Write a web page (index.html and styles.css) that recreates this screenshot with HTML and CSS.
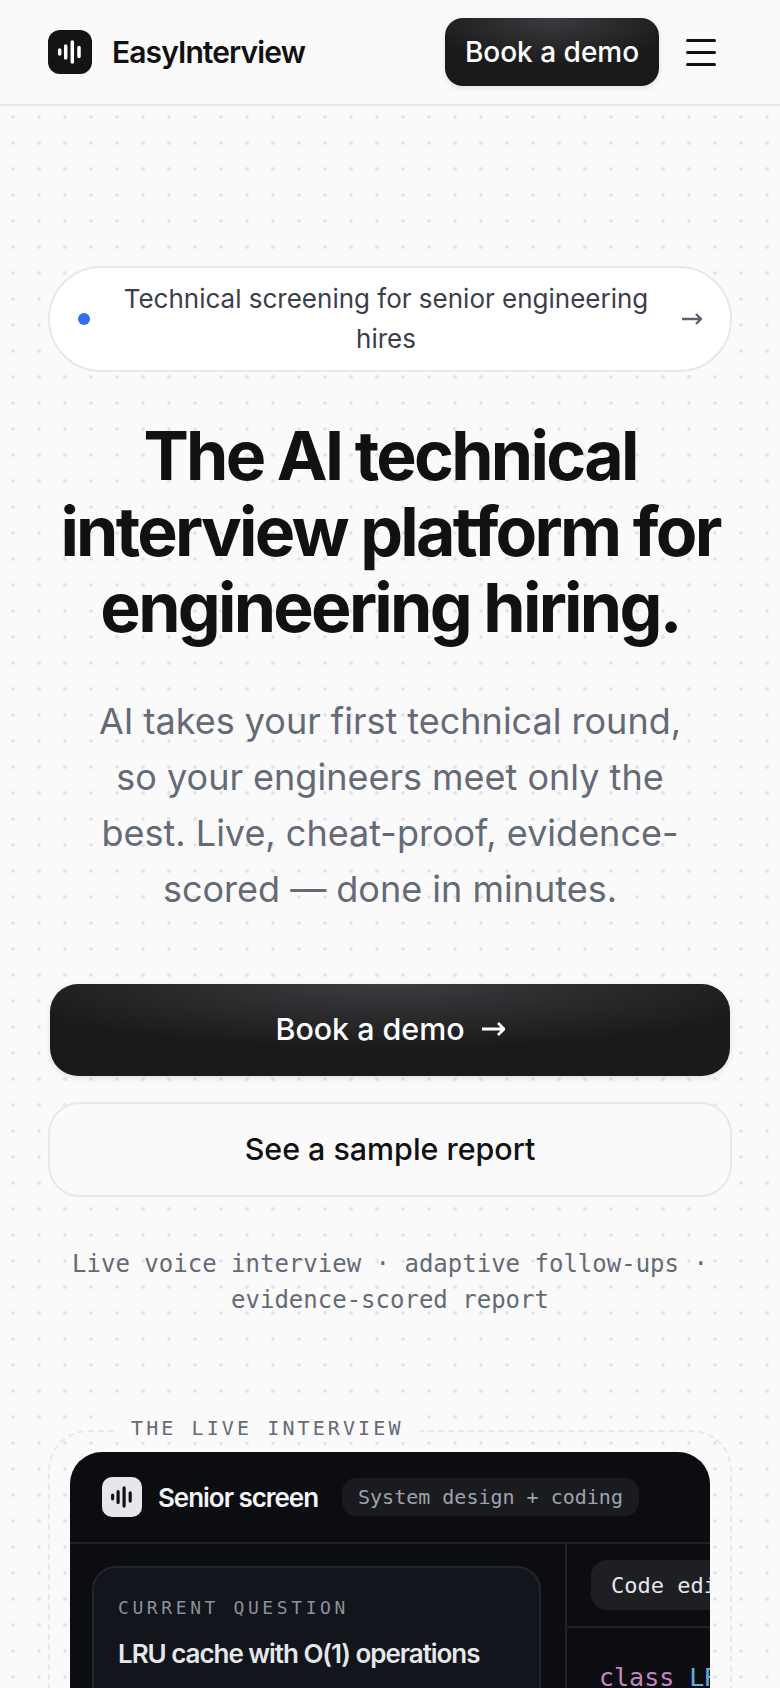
FILE: index.html
```html
<!DOCTYPE html>
<html lang="en">
<head>
<meta charset="utf-8">
<title>EasyInterview</title>
<link rel="stylesheet" href="styles.css">
</head>
<body>
<header class="nav">
  <a class="brand">
    <span class="logo">
      <svg viewBox="0 0 44 44" width="44" height="44"><path class="bars" d="M11.700 20v4M17.700 16v12M24.300 12v20M31 17.500v9"/></svg>
    </span>
    <span class="brand-name">EasyInterview</span>
  </a>
  <div class="nav-actions">
    <a class="btn-dark nav-cta">Book a demo</a>
    <span class="burger"><i></i><i></i><i></i></span>
  </div>
</header>
<main class="hero">
  <div class="badge">
    <span class="badge-dot"></span>
    <span class="badge-text">Technical screening for senior engineering hires</span>
    <svg class="badge-arrow" viewBox="0 0 20 12" width="20" height="12"><path d="M0 6h19M14 1l5 5-5 5"/></svg>
  </div>
  <h1>The AI technical interview platform for engineering hiring.</h1>
  <p class="sub">AI takes your first technical round, so your engineers meet only the best. Live, cheat-proof, evidence-scored — done in minutes.</p>
  <a class="btn-dark btn-main"><span>Book a demo</span><svg class="btn-arrow" viewBox="0 0 23 14" width="23" height="14"><path d="M0 7h22M16 1l6 6-6 6"/></svg></a>
  <a class="btn-ghost">See a sample report</a>
  <p class="note">Live voice interview · adaptive follow-ups · evidence-scored report</p>
  <section class="frame">
    <div class="frame-label">THE LIVE INTERVIEW</div>
    <div class="panel">
      <div class="panel-head">
        <span class="panel-logo">
          <svg viewBox="0 0 44 44" width="40" height="40"><path class="bars" d="M11.700 20v4M17.700 16v12M24.300 12v20M31 17.500v9"/></svg>
        </span>
        <span class="panel-title">Senior screen</span>
        <span class="chip">System design + coding</span>
      </div>
      <div class="panel-body">
        <div class="col-left">
          <div class="qcard">
            <div class="qlabel">CURRENT QUESTION</div>
            <div class="qtitle">LRU cache with O(1) operations</div>
          </div>
        </div>
        <div class="col-right">
          <div class="tabs"><span class="tab">Code editor</span></div>
          <div class="code"><span class="kw">class</span> <span class="cls">LRUCache</span></div>
        </div>
      </div>
    </div>
  </section>
</main>
</body>
</html>
```
FILE: styles.css
```css
* { box-sizing: border-box; }
html, body { margin: 0; height: 1688px; overflow: hidden; }
body {
  background-color: #fafafa;
  background-image: radial-gradient(circle at 13px 13px, #e4e6eb 1.6px, transparent 2.2px);
  background-size: 26px 26px;
  font-family: Inter, sans-serif;
  color: #111113;
}
.bars { fill: none; stroke: currentColor; stroke-width: 3.500; stroke-linecap: round; }
.nav {
  height: 106px;
  padding: 0 64px 0 48px;
  display: flex;
  align-items: center;
  justify-content: space-between;
  background: #fafafa;
  border-bottom: 2px solid #e8e8ea;
}
.brand { display: flex; align-items: center; gap: 20px; }
.logo {
  width: 44px; height: 44px; border-radius: 12px;
  background: #141416; color: #fff;
  display: flex; align-items: center; justify-content: center;
}
.brand-name { font-size: 30px; font-weight: 600; letter-spacing: -0.03em; }
.nav-actions { display: flex; align-items: center; gap: 27px; }
.btn-dark {
  color: #fff;
  background: radial-gradient(ellipse 60% 70% at 50% 0%, #3c3c40 0%, #1a1a1c 100%), #1a1a1c;
  display: flex; align-items: center; justify-content: center;
  box-shadow: 0 2px 6px rgba(0,0,0,.1);
}
.nav-cta { width: 214px; height: 68px; border-radius: 18px; font-size: 28px; font-weight: 500; }
.burger { width: 30px; display: flex; flex-direction: column; gap: 9px; }
.burger i { display: block; height: 3px; border-radius: 2px; background: #111113; }
.hero { padding: 160px 48px 0; display: flex; flex-direction: column; align-items: stretch; }
.badge {
  height: 106px; padding: 0 28px; border-radius: 53px;
  background: #fff; border: 2px solid #e8e8ea;
  display: flex; align-items: center; gap: 24px;
}
.badge-dot { flex: none; width: 12px; height: 12px; border-radius: 50%; background: #2f6ff0; }
.badge-text { flex: 1; text-align: center; font-size: 26px; line-height: 40px; color: #3a3f4b; }
.badge-arrow { flex: none; fill: none; stroke: #5b616e; stroke-width: 2.400; }
h1 {
  margin: 45px 0 0; text-align: center;
  font-size: 68px; line-height: 76px; font-weight: 700; letter-spacing: -0.04em; color: #111113;
}
.sub {
  margin: 48px 30px 0; text-align: center;
  font-size: 36px; line-height: 56px; color: #646a76;
}
.btn-main { margin: 67px 2px 0; height: 92px; padding-bottom: 2px; border-radius: 28px; font-size: 30.400px; font-weight: 500; gap: 17px; }
.btn-arrow { flex: none; fill: none; stroke: #fff; stroke-width: 2.800; }
.btn-ghost {
  margin-top: 26px; height: 95px; padding-bottom: 2px; border-radius: 32px;
  border: 2px solid #e8e8ea; background: #fafafa;
  display: flex; align-items: center; justify-content: center;
  font-size: 30.400px; font-weight: 500;
}
.note {
  margin: 49px 0 0; text-align: center;
  font-family: "DejaVu Sans Mono", monospace;
  font-size: 24px; line-height: 36px; color: #646a76;
}
.frame {
  position: relative; margin-top: 112px; height: 400px;
  padding: 20px 20px 0;
  border: 2px dashed #e8e8ea; border-radius: 40px;
}
.frame-label {
  position: absolute; left: 65px; top: -18px; padding: 0 16px;
  background: #fafafa;
  font-family: "DejaVu Sans Mono", monospace; font-size: 20px; line-height: 28px;
  letter-spacing: 0.155em; color: #646a76;
}
.panel { background: #0c0d11; border-radius: 32px 32px 0 0; height: 380px; overflow: hidden; }
.panel-head {
  height: 92px; padding: 0 32px;
  display: flex; align-items: center; gap: 16px;
  border-bottom: 2px solid #212226;
}
.panel-logo {
  width: 40px; height: 40px; border-radius: 10px; background: #e5e7eb; color: #111113;
  display: flex; align-items: center; justify-content: center;
}
.panel-title { font-size: 26px; font-weight: 600; letter-spacing: -0.04em; color: #f4f4f5; margin-right: 8px; }
.chip {
  height: 38px; padding: 0 16px; border-radius: 14px; background: #1a1b1f;
  display: flex; align-items: center;
  font-family: "DejaVu Sans Mono", monospace; font-size: 20px; color: #9ca3af;
}
.panel-body { display: flex; width: 900px; }
.col-left { width: 497px; padding: 22px 24px 22px 22px; border-right: 2px solid #212226; }
.qcard {
  background: #12151b; border: 2px solid #22252b; border-radius: 24px;
  padding: 26px 24px; height: 200px;
}
.qlabel { font-family: "DejaVu Sans Mono", monospace; font-size: 18px; line-height: 28px; letter-spacing: 0.2em; color: #8b909a; }
.qtitle { margin-top: 14px; font-size: 26px; line-height: 36px; font-weight: 600; letter-spacing: -0.04em; color: #e5e7eb; }
.col-right { flex: 1; }
.tabs { height: 84px; padding: 16px 24px 0; border-bottom: 2px solid #212226; }
.tab {
  display: inline-flex; align-items: center; height: 50px; padding: 0 20px; border-radius: 16px; background: #1e1f23;
  font-family: "DejaVu Sans Mono", monospace; font-size: 22px; color: #e5e7eb;
}
.code { padding: 34px 32px; font-family: "DejaVu Sans Mono", monospace; font-size: 25px; line-height: 32px; color: #ddd; }
.kw { color: #c586c0; }
.cls { color: #5ab0e0; }
```
